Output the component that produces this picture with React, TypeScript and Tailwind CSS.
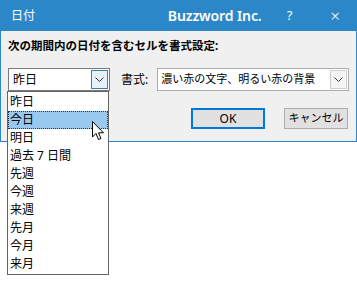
const items = ["昨日", "今日", "明日", "過去 7 日間", "先週", "今週", "来週", "先月", "今月", "来月"];

const Chevron = () => (
  <svg width="9" height="5" viewBox="0 0 9 5" fill="none">
    <path d="M0.5 0.5 L4.5 4.5 L8.5 0.5" stroke="#333" strokeWidth="1" />
  </svg>
);

const Cursor = () => (
  <svg width="13" height="20" viewBox="0 0 13 20" className="absolute left-[92px] top-[121px]">
    <path
      d="M0.5 0.5 L0.5 16 L4 12.5 L6.5 18.5 L9 17.5 L6.5 11.8 L11.5 11.8 Z"
      fill="#fff"
      stroke="#000"
      strokeWidth="1"
      strokeLinejoin="miter"
    />
  </svg>
);

export default function App() {
  return (
    <div
      className="relative h-[294px] w-[357px] overflow-hidden bg-white text-[12px] text-black"
      style={{ fontFamily: '"Noto Sans", "Noto Sans CJK JP", sans-serif' }}
    >
      <div className="flex h-[142px] flex-col border-x border-b border-[#2b87c8] bg-[#f0f0f0]">
        {/* title bar */}
        <div className="flex h-[31px] shrink-0 items-center bg-[#2b87c8] pl-[10px] pr-[16px] text-white">
          <span className="text-[12px]">日付</span>
          <span className="flex-1" />
          <span className="text-[14px] font-semibold tracking-[-0.1px]">Buzzword Inc.</span>
          <span className="ml-[25px] text-[13px]">?</span>
          <span className="ml-[38px] text-[17px] font-light leading-none">×</span>
        </div>

        {/* body */}
        <div className="flex flex-col px-[7px] pt-[5px]">
          <div className="h-[20px] whitespace-nowrap text-[11.5px] font-bold leading-[20px]">
            次の期間内の日付を含むセルを書式設定:
          </div>

          <div className="mt-[12px] flex items-center">
            <div className="flex h-[23px] w-[102px] shrink-0 items-center border border-[#7a7a7a] bg-white pl-[4px] pr-[1px]">
              <span className="flex-1">昨日</span>
              <div className="flex h-[19px] w-[17px] items-center justify-center border border-[#3c7fb1] bg-[#e5f1fb]">
                <Chevron />
              </div>
            </div>
            <span className="ml-[11px] shrink-0 whitespace-nowrap">書式:</span>
            <div className="ml-[9px] flex h-[23px] min-w-0 flex-1 items-center border border-[#adadad] bg-white pl-[3px] pr-[1px]">
              <span className="flex-1 whitespace-nowrap text-[11px]">濃い赤の文字、明るい赤の背景</span>
              <div className="flex h-[19px] w-[17px] shrink-0 items-center justify-center border border-[#cfcfcf] bg-[#f5f5f5]">
                <Chevron />
              </div>
            </div>
          </div>

          <div className="mt-[17px] flex justify-end pr-[1px]">
            <button className="h-[21px] w-[74px] border-2 border-[#0078d7] bg-[#e1e1e1] text-[12px]">OK</button>
            <button className="ml-[19px] h-[21px] w-[64px] whitespace-nowrap border border-[#adadad] bg-[#e1e1e1] text-[11px]">
              キャンセル
            </button>
          </div>
        </div>
      </div>

      {/* open dropdown list */}
      <div className="absolute left-[7px] top-[91px] flex w-[102px] flex-col border border-[#646464] bg-white py-[1px]">
        {items.map((t, i) => (
          <div
            key={t}
            className={
              i === 1
                ? "h-[18px] border border-dotted border-[#333] bg-[#99c9ef] pl-[1px] leading-[16px]"
                : "h-[18px] pl-[2px] leading-[18px]"
            }
          >
            {t}
          </div>
        ))}
      </div>

      <Cursor />
    </div>
  );
}
